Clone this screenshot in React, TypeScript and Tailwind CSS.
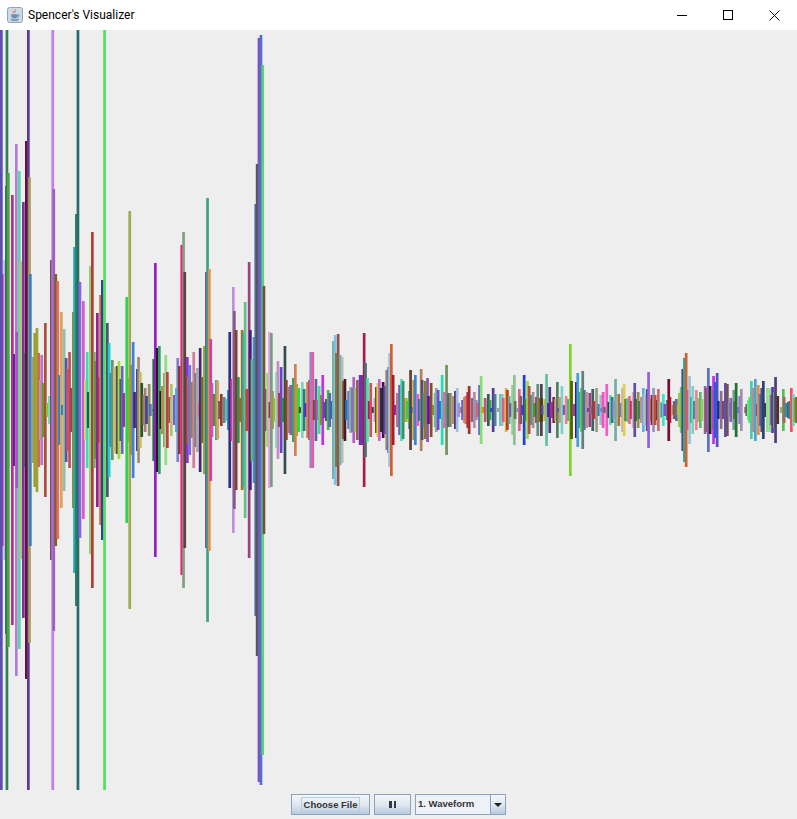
import React from 'react';

type Bar = [number, number, string];

// x, half height, colour, left to right
const bars: Bar[] = [
  [0, 380, '#5a4fb0'], [2, 136, '#a030b0'], [3.4, 150, '#c8b0d8'], [5, 224, '#26706a'], [5.6, 380, '#2f7f55'], [7, 237, '#50a040'],
  [11, 215, '#b0308f'], [13, 56, '#5a2a90'], [15, 266, '#b080d0'], [15.4, 78, '#b050c8'], [18, 239, '#58d8a8'], [19.4, 149, '#b8c080'],
  [22, 208, '#8030a0'], [24, 57, '#2a7a60'], [25, 269, '#6a1030'], [27, 380, '#5a3a90'], [28.2, 233, '#b0a060'], [29, 136, '#3a80c0'],
  [32, 53, '#a0a080'], [33.4, 77, '#a0a020'], [35.6, 82, '#a0a040'], [37.4, 57, '#c07050'], [39.2, 30, '#c0b090'], [40.4, 55, '#c070d0'],
  [42, 27, '#60a020'], [44, 87, '#a85040'], [46, 7, '#90c030'], [48, 14, '#70e0b0'], [50, 150, '#7a4a60'], [51.4, 380, '#c080f0'],
  [52.4, 221, '#a060c0'], [54.4, 136, '#806020'], [56.4, 129, '#e07060'], [58, 35, '#3088c0'], [60, 98, '#e0a060'], [61, 5, '#2080c0'],
  [62.8, 81, '#90c0a0'], [64.8, 52, '#6050a0'], [66, 41, '#c05080'], [68.2, 58, '#c05050'], [70, 22, '#a04060'], [72, 98, '#a09020'],
  [73.2, 163, '#20a8c8'], [75, 196, '#2a8a50'], [76.6, 380, '#2a6a70'], [78.6, 128, '#9060e0'], [82, 109, '#d060c0'], [84, 30, '#e0d080'],
  [85.8, 58, '#40d8b0'], [87, 18, '#106050'], [89, 144, '#90d080'], [91, 178, '#b04030'], [93, 58, '#80a070'], [94, 49, '#609040'],
  [96, 97, '#9020a0'], [97, 33, '#a03070'], [99.2, 115, '#d07030'], [101, 130, '#3040a0'], [103.2, 380, '#50e060'], [106, 87, '#505070'],
  [107.8, 67, '#20d0c8'], [109.4, 37, '#3090b0'], [111, 50, '#709070'], [113, 43, '#c0c070'], [115.8, 44, '#604060'], [117.6, 49, '#a0e030'],
  [119.4, 31, '#207050'], [120.8, 44, '#7060c0'], [122.4, 17, '#a030b0'], [125.4, 113, '#30d050'], [127, 32, '#20e020'], [128.4, 199, '#a0a850'],
  [129.6, 45, '#a09040'], [131.8, 68, '#4080e0'], [133.4, 18, '#501080'], [135, 18, '#505050'], [136, 41, '#4040a0'], [137.2, 53, '#a09070'],
  [139, 38, '#c0c060'], [140.4, 27, '#305030'], [142.4, 15, '#a08040'], [143.8, 22, '#a08080'], [145.2, 14, '#404090'], [147.8, 26, '#909060'],
  [149, 6, '#5070c0'], [151, 1, '#909090'], [152.4, 51, '#2a6a40'], [154, 147, '#9020c0'], [156, 62, '#301030'], [158, 64, '#30a060'],
  [159.4, 19, '#202020'], [161, 24, '#b09050'], [163, 37, '#b09080'], [164.4, 55, '#90e080'], [166, 38, '#c04040'], [168.4, 13, '#a05040'],
  [170, 26, '#b0c070'], [171.4, 10, '#80e0a0'], [173, 15, '#b040d0'], [175, 22, '#30c0e0'], [176.4, 52, '#8080d0'], [178, 44, '#804030'],
  [180.4, 165, '#f02080'], [182.2, 178, '#80a080'], [183.4, 138, '#604040'], [186, 53, '#9030d0'], [187, 34, '#c07000'], [188.4, 45, '#7070e0'],
  [190.4, 28, '#908060'], [192.4, 58, '#d08090'], [194.4, 37, '#708090'], [196, 42, '#a0b0a0'], [197, 7, '#d09080'], [198.8, 62, '#502080'],
  [200.8, 33, '#806050'], [203, 64, '#70c020'], [205, 138, '#805090'], [206.2, 212, '#40a080'], [208, 141, '#e09050'], [209.4, 71, '#d040a0'],
  [210.6, 27, '#d050c0'], [212.4, 16, '#907030'], [215, 30, '#40b080'], [216.4, 29, '#e0a060'], [218.2, 9, '#805070'], [220, 16, '#904020'],
  [222.8, 13, '#7080a0'], [225, 11, '#60c0a0'], [227, 20, '#3090c0'], [228.4, 78, '#303080'], [230.4, 31, '#e030a0'], [232, 123, '#c090e0'],
  [233, 99, '#806080'], [234.8, 80, '#804030'], [237, 33, '#309050'], [238.8, 12, '#807030'], [240.8, 80, '#a07020'], [242.4, 77, '#20b0c0'],
  [243.8, 108, '#60c090'], [245.4, 21, '#d04030'], [247.8, 148, '#a04080'], [249, 80, '#402080'], [250.6, 51, '#60c060'], [252.6, 73, '#5090c0'],
  [254.4, 206, '#5a6aa0'], [255.8, 246, '#406050'], [257.6, 372, '#8050c0'], [259.6, 375, '#5070d0'], [261.4, 345, '#60d070'], [262.6, 124, '#705040'],
  [264.6, 21, '#904090'], [266.2, 37, '#90e060'], [268, 78, '#f0a0e0'], [268.6, 8, '#a02060'], [270, 77, '#70a080'], [271.2, 19, '#a09060'],
  [273.2, 12, '#a0c020'], [275, 38, '#90e0c0'], [276.6, 49, '#c090c0'], [278, 17, '#a04040'], [279.8, 43, '#7040d0'], [281.8, 12, '#20a040'],
  [283.6, 64, '#305050'], [285, 30, '#904020'], [287.2, 23, '#a08070'], [289.4, 25, '#8060b0'], [292, 32, '#40a060'], [294, 46, '#d08050'],
  [295.4, 26, '#b0a040'], [297.4, 22, '#20e040'], [298.8, 3, '#505000'], [301, 28, '#80d0c0'], [302.8, 21, '#208080'], [304.2, 7, '#5030d0'],
  [306.2, 28, '#e07050'], [308.2, 30, '#a05050'], [309.4, 58, '#a080d0'], [311.4, 58, '#e060a0'], [312.8, 10, '#a04020'], [314.6, 31, '#6060a0'],
  [316.2, 10, '#c050b0'], [317.8, 24, '#40e090'], [319.8, 15, '#80a000'], [321.4, 35, '#c030f0'], [322.8, 8, '#7040a0'], [325, 11, '#405090'],
  [326.8, 20, '#40c040'], [328.4, 17, '#6060b0'], [329.8, 9, '#4060c0'], [332, 69, '#70b0b0'], [333.8, 75, '#80c0e0'], [335, 57, '#808030'],
  [336.8, 76, '#905050'], [338.8, 55, '#70b0a0'], [340.8, 53, '#b0c0b0'], [341.8, 29, '#a06030'], [343.6, 31, '#402030'], [345, 10, '#2070b0'],
  [347.2, 19, '#5090c0'], [349.2, 23, '#c090c0'], [351, 22, '#30a090'], [352.4, 33, '#b060c0'], [354.2, 22, '#90d060'], [356, 30, '#906050'],
  [358.8, 35, '#7030b0'], [361, 35, '#7030b0'], [362.8, 77, '#a02050'], [364.2, 47, '#507070'], [366.2, 32, '#50e0b0'], [367.8, 9, '#c01070'],
  [369.4, 27, '#d05060'], [371.8, 3, '#304030'], [373.6, 12, '#c090d0'], [375, 23, '#705010'], [376.4, 27, '#e0d040'], [378, 31, '#d060d0'],
  [379.8, 22, '#204020'], [381.8, 28, '#401040'], [383.4, 24, '#5050b0'], [385.4, 40, '#a08060'], [387.2, 43, '#4080d0'], [388.2, 57, '#b0c0d8'],
  [390, 66, '#d06030'], [391.8, 35, '#a02030'], [394, 5, '#a020a0'], [396, 17, '#a08090'], [398.2, 25, '#7060b0'], [400.2, 31, '#40e0c0'],
  [401.8, 29, '#409060'], [403.4, 12, '#a08080'], [405, 12, '#a0c020'], [406.2, 9, '#30d040'], [408, 19, '#40b090'], [409.2, 40, '#604030'],
  [410.6, 3, '#4040d0'], [412.4, 30, '#b09040'], [414, 35, '#4080d0'], [416.4, 16, '#e060c0'], [418, 11, '#2080a0'], [419.8, 41, '#b08060'],
  [420.8, 30, '#505070'], [422.4, 17, '#4090a0'], [424, 29, '#808020'], [426.2, 32, '#9050b0'], [427.2, 14, '#6010a0'], [429.8, 27, '#805020'],
  [431.8, 5, '#908040'], [433.8, 17, '#60c0a0'], [435, 22, '#80b090'], [436.8, 20, '#8040e0'], [438.6, 9, '#2070e0'], [440.8, 35, '#20e0b0'],
  [442.8, 18, '#f060c0'], [444.4, 5, '#a0a060'], [445.2, 45, '#709060'], [447, 17, '#407080'], [449, 17, '#908060'], [452, 14, '#b09070'],
  [454, 19, '#504080'], [455.8, 22, '#a0c0e0'], [457.2, 7, '#a090e0'], [459.8, 3, '#a09040'], [461.2, 10, '#6060e0'], [463, 13, '#c09080'],
  [464.4, 14, '#d08050'], [466.4, 18, '#c02050'], [467.8, 24, '#a03030'], [470.8, 12, '#906080'], [473, 18, '#b090a0'], [475, 10, '#9090c0'],
  [476.2, 7, '#e06060'], [478.2, 25, '#6060c0'], [479.8, 34, '#80e070'], [481.4, 3, '#c0a020'], [483.8, 12, '#c05070'], [485.8, 9, '#a0a0a0'],
  [487, 16, '#306050'], [488.6, 10, '#30a050'], [490.2, 2, '#2040f0'], [491.8, 22, '#504090'], [493.8, 16, '#508090'], [497, 2, '#a0a0a0'],
  [499, 16, '#70c0c0'], [500.8, 16, '#90c0c0'], [502, 12, '#e06080'], [504.8, 22, '#e0b040'], [506, 20, '#b04020'], [507.8, 14, '#70a090'],
  [509.2, 7, '#8050b0'], [511.2, 25, '#90d0a0'], [513, 35, '#90c090'], [513.8, 9, '#707050'], [516.2, 2, '#60a0e0'], [518, 21, '#e06090'],
  [519.4, 14, '#806050'], [521.2, 5, '#6030d0'], [522.8, 35, '#2040d0'], [524.2, 11, '#408040'], [526.2, 29, '#90e040'], [527.8, 24, '#b05050'],
  [530, 15, '#509080'], [531.8, 18, '#a09090'], [533, 7, '#20b020'], [535.2, 13, '#a02050'], [536.4, 26, '#609080'], [538.4, 12, '#a06010'],
  [540, 26, '#504050'], [540.2, 12, '#404020'], [541.4, 5, '#5050e0'], [543.4, 11, '#d0b040'], [545.2, 36, '#60c0a0'], [547, 7, '#6020a0'],
  [548.4, 23, '#503080'], [550.2, 8, '#a030b0'], [552.4, 13, '#802030'], [554.2, 11, '#b0b090'], [556, 28, '#508060'], [557.2, 2, '#5050d0'],
  [559, 13, '#e09050'], [560.6, 24, '#80d0d0'], [562.8, 5, '#6060c0'], [564.8, 14, '#f08090'], [567, 11, '#50b090'], [569, 66, '#80d030'],
  [570.2, 29, '#506000'], [572.6, 6, '#a04090'], [575, 28, '#402060'], [576.4, 37, '#40a0e0'], [578, 18, '#40a0a0'], [580, 22, '#50e050'],
  [581.4, 39, '#608080'], [583, 20, '#507090'], [585.2, 18, '#b09090'], [587, 2, '#6040e0'], [588.4, 17, '#a04080'], [590.2, 4, '#a08070'],
  [591.4, 21, '#406060'], [593, 9, '#e02030'], [595.2, 22, '#90a080'], [597.4, 6, '#3080c0'], [599.4, 15, '#b0b0d0'], [600.6, 2, '#4080a0'],
  [601.8, 18, '#f050c0'], [603.4, 3, '#408060'], [605.4, 26, '#f060c0'], [607.4, 8, '#304040'], [609, 15, '#70d0c0'], [610.8, 13, '#208080'],
  [612.4, 9, '#b080d0'], [614.2, 31, '#70b0a0'], [617.4, 16, '#b07030'], [619.2, 7, '#7080a0'], [621.2, 22, '#c0b0c0'], [622.8, 26, '#e0d050'],
  [624.2, 11, '#608040'], [626.2, 12, '#60c090'], [628.2, 14, '#e07090'], [629.8, 9, '#c03070'], [631.8, 18, '#e0b0b0'], [633.4, 27, '#6050a0'],
  [634.6, 11, '#406030'], [636.8, 18, '#909050'], [637.8, 9, '#408060'], [640, 13, '#c09090'], [642, 22, '#60b0e0'], [643.4, 16, '#c0c0c0'],
  [645.8, 21, '#605080'], [647.2, 38, '#9060e0'], [649.2, 11, '#d09040'], [650.6, 15, '#902030'], [652.2, 22, '#a090c0'], [653.8, 15, '#c05020'],
  [656, 10, '#604050'], [657, 21, '#c07070'], [659, 8, '#80d080'], [660.8, 7, '#5090c0'], [662, 16, '#40e0d0'], [663.4, 6, '#a040d0'],
  [665.8, 10, '#508080'], [667.4, 31, '#701030'], [668.6, 13, '#b01030'], [671.4, 5, '#c09060'], [672.8, 9, '#806050'], [675, 11, '#5070a0'],
  [676.8, 5, '#e0a040'], [678, 17, '#b0c050'], [679.8, 23, '#60d060'], [681.4, 41, '#604080'], [683, 52, '#20b0a0'], [684.8, 57, '#d06030'],
  [686.4, 20, '#e05090'], [688.2, 34, '#a0c0d0'], [690, 13, '#20c080'], [691.4, 24, '#80d0c0'], [693, 9, '#3090b0'], [695, 20, '#f080a0'],
  [697, 12, '#c0a070'], [699, 18, '#50c060'], [700.6, 11, '#90d060'], [703.8, 24, '#9060b0'], [704.8, 22, '#a05060'], [707, 42, '#6070c0'],
  [708.8, 24, '#401030'], [710.8, 20, '#40b040'], [712.2, 34, '#c030f0'], [714, 28, '#2060d0'], [715.8, 37, '#5050c0'], [717.4, 9, '#202090'],
  [719, 9, '#408080'], [719.8, 19, '#907080'], [721.8, 9, '#804080'], [724, 27, '#6050a0'], [726, 26, '#705060'], [727.8, 7, '#8090a0'],
  [729.4, 12, '#8060c0'], [732.4, 20, '#70a090'], [733, 9, '#607040'], [734.8, 27, '#207030'], [736.8, 3, '#5080a0'], [738.4, 14, '#9070d0'],
  [740, 21, '#a090b0'], [744.4, 3, '#c03060'], [745.4, 6, '#408060'], [747, 10, '#70e0b0'], [748.4, 13, '#50e050'], [750, 29, '#40d0b0'],
  [751.6, 22, '#b09090'], [754, 31, '#50a0d0'], [755.8, 6, '#9050a0'], [757, 25, '#e09040'], [758.8, 16, '#7070a0'], [760.4, 22, '#405090'],
  [762, 29, '#304070'], [763.8, 7, '#304050'], [766, 22, '#90e090'], [768.4, 22, '#90e090'], [769.8, 15, '#906090'], [771.2, 23, '#6030c0'],
  [773, 18, '#60b040'], [774.2, 33, '#504070'], [776.4, 14, '#503030'], [780, 3, '#90b070'], [782, 21, '#50c050'], [782.8, 13, '#b06060'],
  [784.8, 7, '#3090a0'], [787, 8, '#207090'], [788.4, 9, '#408080'], [790, 22, '#f05060'], [792, 16, '#70d0d0'], [793.4, 12, '#a0a020'],
  [795, 13, '#608040'],
];

function Waveform() {
  return (
    <svg width="797" height="760" viewBox="0 0 797 760" className="block">
      {bars.map(([x, half, color], i) => (
        <rect key={i} x={x} y={380 - half} width={2.7} height={half * 2} fill={color} />
      ))}
    </svg>
  );
}

function JavaIcon() {
  return (
    <svg width="16" height="16" viewBox="0 0 16 16" className="block">
      <rect x="0.5" y="0.5" width="15" height="15" rx="2" fill="#cdd9e6" stroke="#8fa6bc" />
      <path d="M8 2.5c1.5 1.2-1 2 0 3.2M6.3 4c.8.8-.6 1.2.2 2" fill="none" stroke="#d9682c" strokeWidth="1" />
      <path d="M4.2 7.2h6.6v.8c0 2-1 3-2 3H6.2c-1 0-2-1-2-3z" fill="#6a8db0" />
      <path d="M10.8 8h1.4v1.4l-1.6.8" fill="none" stroke="#6a8db0" strokeWidth="0.8" />
      <path d="M3.5 12.2h8.5M4.5 13.4h6.5" stroke="#5b7f9f" strokeWidth="0.8" />
    </svg>
  );
}

function WindowControls() {
  return (
    <div className="flex h-full">
      <div className="flex w-[46px] items-center justify-center">
        <div className="h-px w-[10px] bg-black" />
      </div>
      <div className="flex w-[46px] items-center justify-center">
        <div className="h-[10px] w-[10px] border border-black" />
      </div>
      <div className="flex w-[46px] items-center justify-center">
        <svg width="11" height="11" viewBox="0 0 11 11">
          <path d="M0.5 0.5l10 10M10.5 0.5l-10 10" stroke="#111" strokeWidth="1" fill="none" />
        </svg>
      </div>
    </div>
  );
}

const buttonClass =
  'flex h-[21px] items-center justify-center border border-[#8ba3bd] bg-gradient-to-b from-[#f4f7fa] via-[#dfe8f1] to-[#b6cbe0]';

export default function App() {
  return (
    <div className="flex h-[819px] w-[797px] flex-col overflow-hidden bg-[#eeeeee] font-['Liberation_Sans',sans-serif]">
      <div className="flex h-[30px] items-center justify-between bg-white">
        <div className="flex items-center pl-[7px]">
          <JavaIcon />
          <span className="ml-[5px] font-['Roboto',sans-serif] text-[12px] text-black">Spencer's Visualizer</span>
        </div>
        <WindowControls />
      </div>

      <Waveform />

      <div className="flex flex-1 justify-center gap-1 pt-1">
        <button className={`${buttonClass} w-[79px]`}>
          <span className="border border-[#b9cde2] px-[2px] text-[9.5px] leading-[13px] font-bold text-[#333333]">Choose File</span>
        </button>
        <button className={`${buttonClass} w-[37px] gap-[2px]`}>
          <span className="h-[7px] w-[2.5px] bg-[#2f3a4a]" />
          <span className="h-[7px] w-[2.5px] bg-[#2f3a4a]" />
        </button>
        <div className="flex">
          <div className="flex h-[21px] w-[76px] items-center border border-[#8ba3bd] bg-[#eef1f5] pl-[2px] text-[9.5px] font-bold text-[#333333]">
            1. Waveform
          </div>
          <div className={`${buttonClass} w-[15px] border-l-0`}>
            <span className="h-0 w-0 border-x-[4px] border-t-[4px] border-x-transparent border-t-[#222222]" />
          </div>
        </div>
      </div>
    </div>
  );
}
